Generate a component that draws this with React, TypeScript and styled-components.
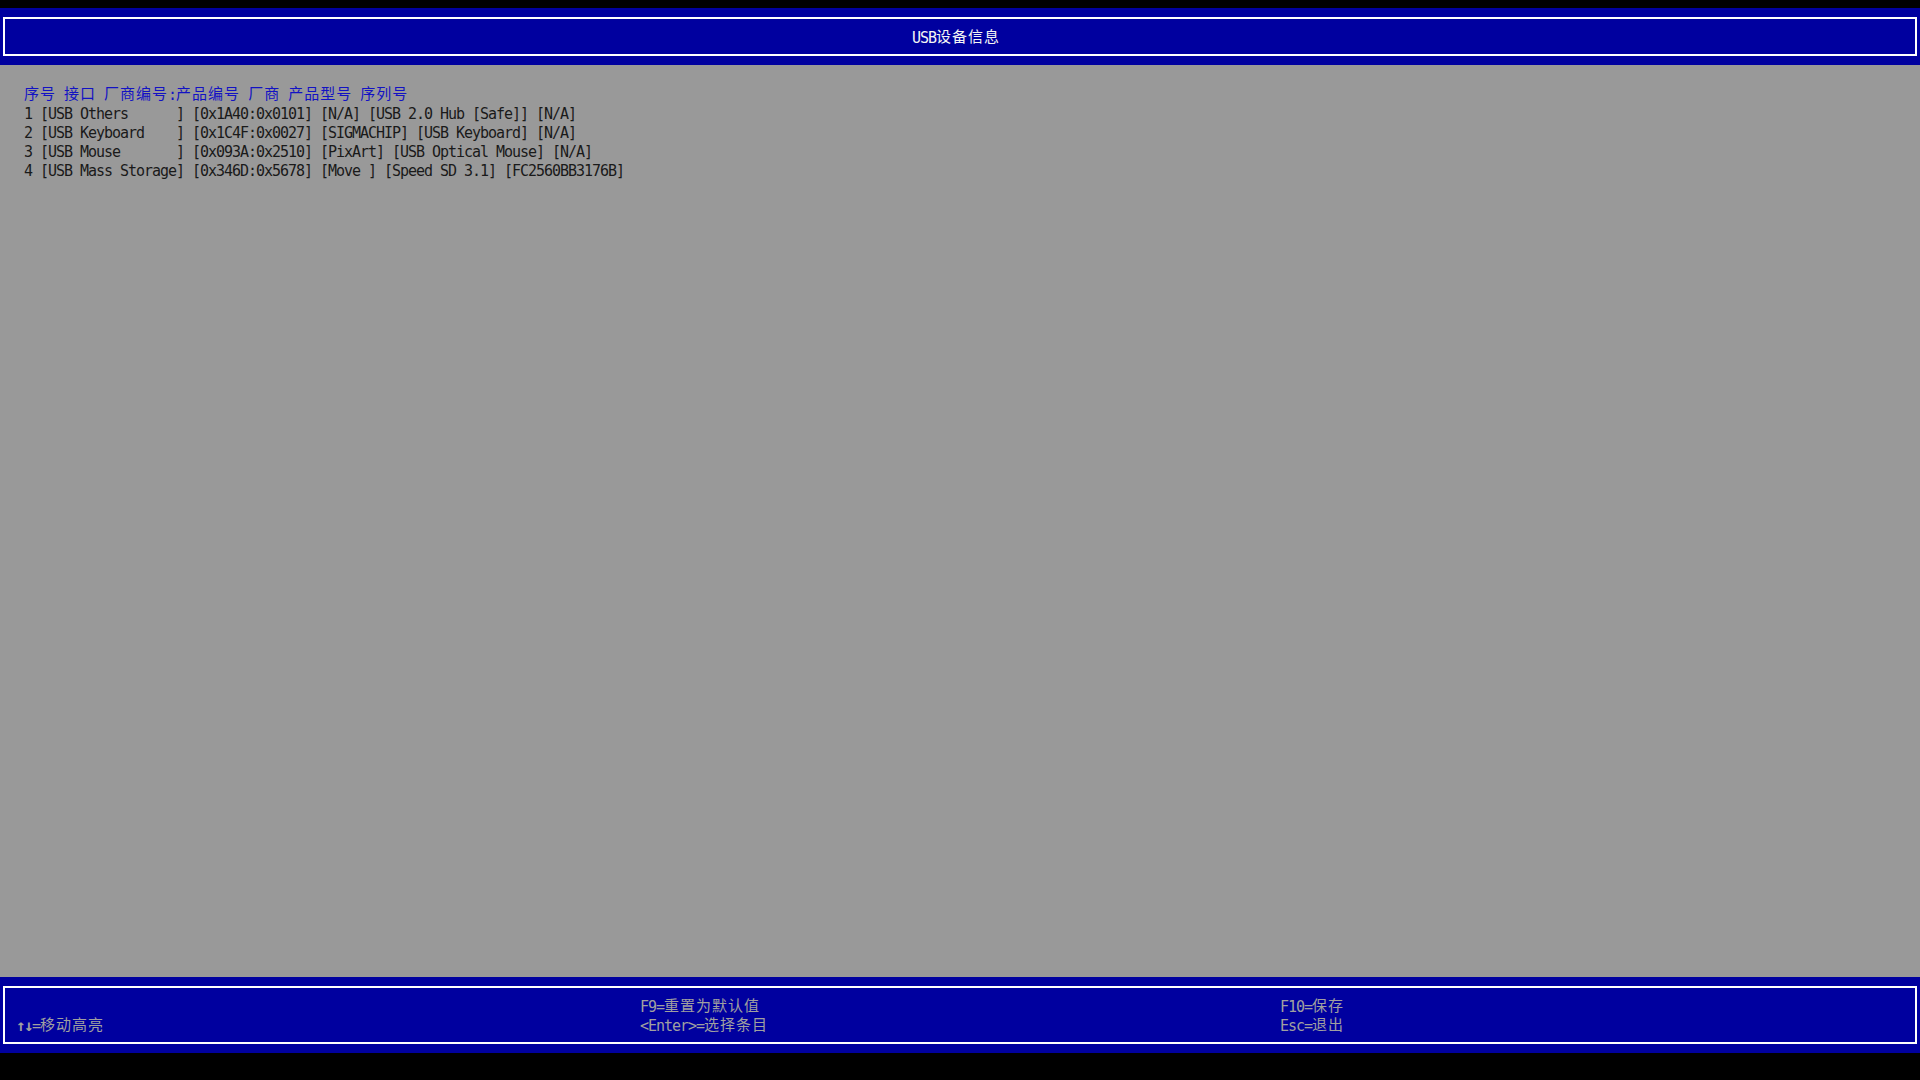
import React from "react";
import styled, { createGlobalStyle } from "styled-components";

const BLUE = "#00009f";
const GRAY = "#999999";

const GlobalStyle = createGlobalStyle`
  html, body { margin: 0; padding: 0; background: #000; }
  body { font-family: "DejaVu Sans Mono", "Noto Sans CJK SC", monospace; }
  * { box-sizing: border-box; }
`;

const Screen = styled.div`
  width: 1920px;
  height: 1080px;
  padding-top: 8px;
  display: flex;
  flex-direction: column;
  background: #000;
  overflow: hidden;
`;

const Band = styled.div<{ $h: number }>`
  background: ${BLUE};
  height: ${(p) => p.$h}px;
  padding: 9px 3px;
  flex: none;
`;

const FrameBox = styled.div`
  border: 2px solid #ffffff;
  height: 100%;
`;

const TitleBox = styled(FrameBox)`
  padding: 8px 8px 0 0;
  text-align: center;
`;

const Content = styled.div`
  background: ${GRAY};
  height: 912px;
  padding: 19px 0 0 24px;
  flex: none;
`;

const Line = styled.div<{ $color: string }>`
  height: 19px;
  font-family: "DejaVu Sans Mono", monospace;
  font-size: 15px;
  line-height: 19px;
  white-space: pre;
  color: ${(p) => p.$color};
`;

const FooterBox = styled(FrameBox)`
  padding: 8px 0 0 11px;
  display: grid;
  grid-template-columns: 624px 640px 1fr;
  align-content: start;
`;

const FooterCol = styled.div`
  display: grid;
  grid-template-rows: 19px 19px;
`;

const Narrow = styled.span`
  font-family: "DejaVu Sans Mono", monospace;
  font-size: 15px;
  line-height: 1;
  letter-spacing: -1.03px;
  vertical-align: -2px;
`;

const Arrow = styled.span`
  font-family: "DejaVu Sans Mono", monospace;
  font-size: 16px;
  line-height: 1;
  font-weight: bold;
  letter-spacing: -1.63px;
  vertical-align: -2px;
`;

const Wide = styled.span`
  font-family: "Noto Sans CJK SC", sans-serif;
  font-size: 15px;
  line-height: 1;
  letter-spacing: 1px;
  vertical-align: -1px;
`;

const Rest = styled.div`
  flex: 1;
  background: #000;
`;

const Mono: React.FC<{ text: string }> = ({ text }) => {
  const parts = text.match(/[\u2E80-\uFFFF]+|[\u2190-\u21FF]+|[^\u2E80-\uFFFF\u2190-\u21FF]+/g) || [];
  return (
    <>
      {parts.map((p, i) =>
        /[\u2E80-\uFFFF]/.test(p) ? (
          <Wide key={i}>{p}</Wide>
        ) : /[\u2190-\u21FF]/.test(p) ? (
          <Arrow key={i}>{p}</Arrow>
        ) : (
          <Narrow key={i}>{p}</Narrow>
        )
      )}
    </>
  );
};

const header = "序号 接口 厂商编号:产品编号 厂商 产品型号 序列号";
const rows = [
  "1 [USB Others      ] [0x1A40:0x0101] [N/A] [USB 2.0 Hub [Safe]] [N/A]",
  "2 [USB Keyboard    ] [0x1C4F:0x0027] [SIGMACHIP] [USB Keyboard] [N/A]",
  "3 [USB Mouse       ] [0x093A:0x2510] [PixArt] [USB Optical Mouse] [N/A]",
  "4 [USB Mass Storage] [0x346D:0x5678] [Move ] [Speed SD 3.1] [FC2560BB3176B]",
];

const footer: [string, string][] = [
  ["", "↑↓=移动高亮"],
  ["F9=重置为默认值", "<Enter>=选择条目"],
  ["F10=保存", "Esc=退出"],
];

const FOOT_COLOR = "#a0a0a0";

export default function App() {
  return (
    <>
      <GlobalStyle />
      <Screen>
        <Band $h={57}>
          <TitleBox>
            <Line $color="#f4f4f4">
              <Mono text="USB设备信息" />
            </Line>
          </TitleBox>
        </Band>
        <Content>
          <Line $color="#1212c4">
            <Mono text={header} />
          </Line>
          {rows.map((r) => (
            <Line key={r} $color="#1a1a1a">
              <Mono text={r} />
            </Line>
          ))}
        </Content>
        <Band $h={76}>
          <FooterBox>
            {footer.map(([a, b], i) => (
              <FooterCol key={i}>
                <Line $color={FOOT_COLOR}>
                  <Mono text={a} />
                </Line>
                <Line $color={FOOT_COLOR}>
                  <Mono text={b} />
                </Line>
              </FooterCol>
            ))}
          </FooterBox>
        </Band>
        <Rest />
      </Screen>
    </>
  );
}
